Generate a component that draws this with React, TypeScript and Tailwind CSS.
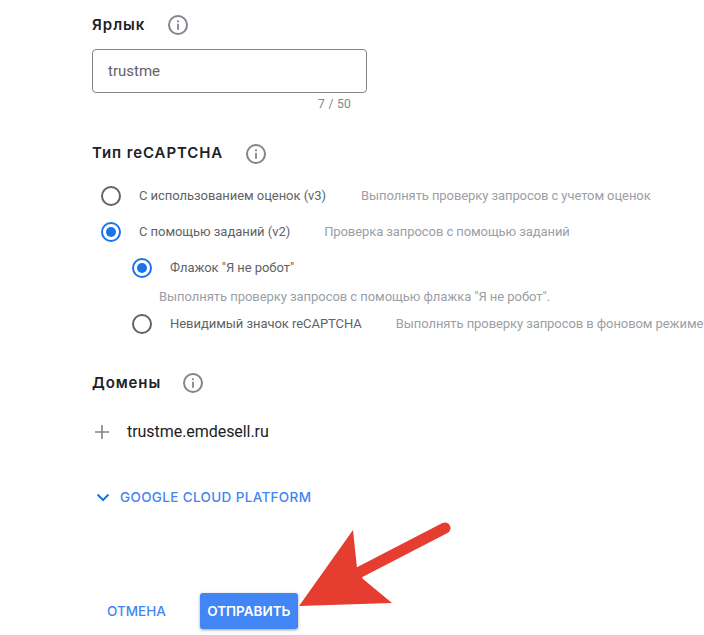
import React from "react";

const Info = ({ className = "" }: { className?: string }) => (
  <svg width="22" height="22" viewBox="0 0 22 22" className={className}>
    <circle cx="11" cy="11" r="9" fill="none" stroke="#80868b" strokeWidth="2" />
    <rect x="10.1" y="9.8" width="1.8" height="6" fill="#80868b" />
    <rect x="10.1" y="6.3" width="1.8" height="1.9" fill="#80868b" />
  </svg>
);

const Radio = ({ on = false }: { on?: boolean }) => (
  <svg width="20" height="20" viewBox="0 0 20 20" className="shrink-0">
    <circle cx="10" cy="10" r="9" fill="none" stroke={on ? "#1a73e8" : "#5f6368"} strokeWidth="2" />
    {on && <circle cx="10" cy="10" r="5" fill="#1a73e8" />}
  </svg>
);

const Option = ({ on, label, hint, gap, className = "" }: { on?: boolean; label: string; hint: string; gap: string; className?: string }) => (
  <div className={`flex items-center whitespace-nowrap h-5 ${className}`}>
    <Radio on={on} />
    <span className="ml-[18px] text-[13px] tracking-[-0.05px] text-[#5f6368]">{label}</span>
    <span className={`${gap} text-[13px] tracking-[-0.08px] text-[#9aa0a6]`}>{hint}</span>
  </div>
);

export default function App() {
  return (
    <div className="relative w-[704px] h-[635px] overflow-hidden bg-white pl-[92px] pt-[15px] font-['Roboto',sans-serif]">
      <div className="flex items-center h-5">
        <span className="w-[75px] text-[15px] font-semibold tracking-[1px] text-[#202124] font-['Inter',sans-serif]">Ярлык</span>
        <Info />
      </div>
      <div className="mt-[14px] w-[275px] h-[44px] rounded-[4px] border border-[#80868b] flex items-center pl-[15px] text-[15px] text-[#5f6368]">
        trustme
      </div>
      <div className="w-[259px] mt-[3px] text-right text-[12px] tracking-[0.3px] leading-[16px] text-[#80868b]">7 / 50</div>

      <div className="flex items-center h-5 mt-[32px]">
        <span className="w-[153px] -mt-[2px] text-[15px] font-semibold tracking-[0.9px] text-[#202124] font-['Inter',sans-serif] whitespace-nowrap">Тип reCAPTCHA</span>
        <Info />
      </div>

      <div className="mt-[22px] pl-[9px]">
        <Option label="С использованием оценок (v3)" hint="Выполнять проверку запросов с учетом оценок" gap="ml-[35px]" />
        <Option on label="С помощью заданий (v2)" hint="Проверка запросов с помощью заданий" gap="ml-[34px]" className="mt-[16px]" />
      </div>
      <div className="mt-[16px] pl-[40px]">
        <Option on label="Флажок &quot;Я не робот&quot;" hint="" gap="" />
        <div className="mt-[9px] ml-[27px] text-[13px] tracking-[-0.05px] leading-[20px] text-[#9aa0a6] whitespace-nowrap">
          Выполнять проверку запросов с помощью флажка "Я не робот".
        </div>
        <Option label="Невидимый значок reCAPTCHA" hint="Выполнять проверку запросов в фоновом режиме" gap="ml-[34px]" className="mt-[7px]" />
      </div>

      <div className="flex items-center h-5 mt-[39px]">
        <span className="w-[90px] text-[15px] font-semibold tracking-[0.9px] text-[#202124] font-['Inter',sans-serif]">Домены</span>
        <Info />
      </div>

      <div className="flex items-center h-6 mt-[27px]">
        <svg width="14" height="14" viewBox="0 0 14 14" className="ml-[3px]">
          <path d="M7 0v14M0 7h14" stroke="#80868b" strokeWidth="1.6" />
        </svg>
        <span className="ml-[18px] text-[16px] tracking-[-0.05px] text-[#202124]">trustme.emdesell.ru</span>
      </div>

      <div className="flex items-center h-5 mt-[43px]">
        <svg width="14" height="9" viewBox="0 0 14 9" className="ml-[4px]">
          <path d="M1.5 1.5L7 7l5.5-5.5" fill="none" stroke="#1a73e8" strokeWidth="2" />
        </svg>
        <span className="ml-[10px] text-[13.5px] font-medium tracking-[0.35px] text-[#4285f4] font-['Inter',sans-serif]">GOOGLE CLOUD PLATFORM</span>
      </div>

      <div className="flex items-center mt-[86px]">
        <span className="ml-[15px] text-[13.5px] font-medium text-[#4285f4] font-['Inter',sans-serif]">ОТМЕНА</span>
        <button className="ml-[34px] w-[98px] h-[36px] rounded-[3px] bg-[#4285f4] text-white text-[13.5px] font-semibold font-['Inter',sans-serif] shadow-[0_1px_3px_rgba(60,64,67,0.5)]">
          ОТПРАВИТЬ
        </button>
      </div>

      <svg className="absolute left-0 top-0 pointer-events-none" width="704" height="635" viewBox="0 0 704 635">
        <path d="M445 528L358 573" stroke="#e53e30" strokeWidth="11" strokeLinecap="round" fill="none" />
        <path d="M299 606L353 530L357 568L363 579L392 603Z" fill="#e53e30" />
      </svg>
    </div>
  );
}
